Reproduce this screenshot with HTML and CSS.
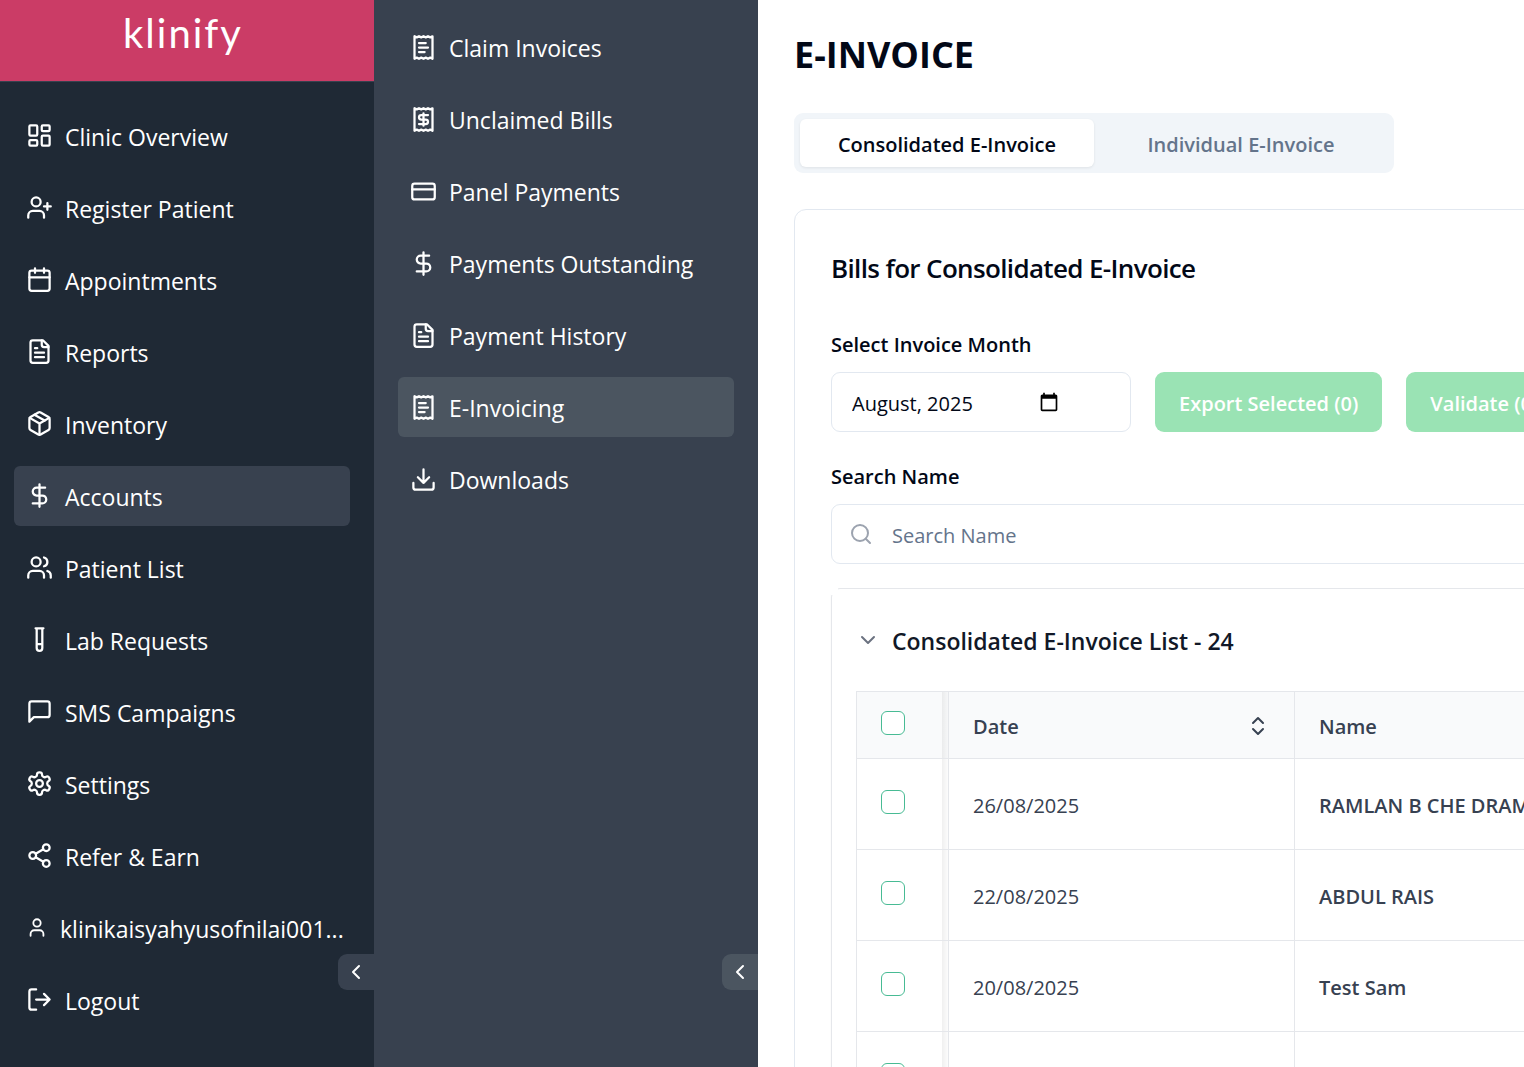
FILE: index.html
```html
<!DOCTYPE html>
<html lang="en">
<head>
    <meta charset="UTF-8">
    <meta name="viewport" content="width=device-width, initial-scale=1.0">
    <title>Klinify - E-Invoice</title>
    <link rel="stylesheet" href="styles.css">
</head>
<body>

    <!-- icon sprite -->
    <svg class="sprite" aria-hidden="true">
        <symbol id="i-dashboard" viewBox="0 0 24 24"><rect x="3" y="3" width="7" height="9" rx="1"/><rect x="14" y="3" width="7" height="5" rx="1"/><rect x="14" y="12" width="7" height="9" rx="1"/><rect x="3" y="16" width="7" height="5" rx="1"/></symbol>
        <symbol id="i-user-plus" viewBox="0 0 24 24"><path d="M16 21v-2a4 4 0 0 0-4-4H6a4 4 0 0 0-4 4v2"/><circle cx="9" cy="7" r="4"/><path d="M19 8v6M22 11h-6"/></symbol>
        <symbol id="i-calendar" viewBox="0 0 24 24"><path d="M8 2v4M16 2v4M3 10h18"/><rect x="3" y="4" width="18" height="18" rx="2"/></symbol>
        <symbol id="i-file" viewBox="0 0 24 24"><path d="M15 2H6a2 2 0 0 0-2 2v16a2 2 0 0 0 2 2h12a2 2 0 0 0 2-2V7Z"/><path d="M14 2v4a2 2 0 0 0 2 2h4M10 9H8M16 13H8M16 17H8"/></symbol>
        <symbol id="i-package" viewBox="0 0 24 24"><path d="m7.5 4.27 9 5.15"/><path d="M21 8a2 2 0 0 0-1-1.73l-7-4a2 2 0 0 0-2 0l-7 4A2 2 0 0 0 3 8v8a2 2 0 0 0 1 1.73l7 4a2 2 0 0 0 2 0l7-4A2 2 0 0 0 21 16Z"/><path d="m3.3 7 8.7 5 8.7-5M12 22V12"/></symbol>
        <symbol id="i-dollar" viewBox="0 0 24 24"><path d="M12 2v20M17 5H9.5a3.5 3.5 0 0 0 0 7h5a3.5 3.5 0 0 1 0 7H6"/></symbol>
        <symbol id="i-users" viewBox="0 0 24 24"><path d="M16 21v-2a4 4 0 0 0-4-4H6a4 4 0 0 0-4 4v2"/><circle cx="9" cy="7" r="4"/><path d="M22 21v-2a4 4 0 0 0-3-3.87M16 3.13a4 4 0 0 1 0 7.75"/></symbol>
        <symbol id="i-tube" viewBox="0 0 24 24"><path d="M14.5 2v17.5c0 1.4-1.1 2.5-2.5 2.5s-2.5-1.1-2.5-2.5V2M8.5 2h7M14.5 16h-5"/></symbol>
        <symbol id="i-message" viewBox="0 0 24 24"><path d="M21 15a2 2 0 0 1-2 2H7l-4 4V5a2 2 0 0 1 2-2h14a2 2 0 0 1 2 2z"/></symbol>
        <symbol id="i-settings" viewBox="0 0 24 24"><path d="M12.22 2h-.44a2 2 0 0 0-2 2v.18a2 2 0 0 1-1 1.73l-.43.25a2 2 0 0 1-2 0l-.15-.08a2 2 0 0 0-2.73.73l-.22.38a2 2 0 0 0 .73 2.73l.15.1a2 2 0 0 1 1 1.72v.51a2 2 0 0 1-1 1.74l-.15.09a2 2 0 0 0-.73 2.73l.22.38a2 2 0 0 0 2.73.73l.15-.08a2 2 0 0 1 2 0l.43.25a2 2 0 0 1 1 1.73V20a2 2 0 0 0 2 2h.44a2 2 0 0 0 2-2v-.18a2 2 0 0 1 1-1.73l.43-.25a2 2 0 0 1 2 0l.15.08a2 2 0 0 0 2.73-.73l.22-.39a2 2 0 0 0-.73-2.73l-.15-.08a2 2 0 0 1-1-1.74v-.5a2 2 0 0 1 1-1.74l.15-.09a2 2 0 0 0 .73-2.73l-.22-.38a2 2 0 0 0-2.73-.73l-.15.08a2 2 0 0 1-2 0l-.43-.25a2 2 0 0 1-1-1.73V4a2 2 0 0 0-2-2z"/><circle cx="12" cy="12" r="3"/></symbol>
        <symbol id="i-share" viewBox="0 0 24 24"><circle cx="18" cy="5" r="3"/><circle cx="6" cy="12" r="3"/><circle cx="18" cy="19" r="3"/><path d="m8.59 13.51 6.83 3.98M15.41 6.51l-6.82 3.98"/></symbol>
        <symbol id="i-user" viewBox="0 0 24 24"><path d="M19 21v-2a4 4 0 0 0-4-4H9a4 4 0 0 0-4 4v2"/><circle cx="12" cy="7" r="4"/></symbol>
        <symbol id="i-logout" viewBox="0 0 24 24"><path d="M9 21H5a2 2 0 0 1-2-2V5a2 2 0 0 1 2-2h4M16 17l5-5-5-5M21 12H9"/></symbol>
        <symbol id="i-receipt-text" viewBox="0 0 24 24"><path d="M4 2v20l2-1 2 1 2-1 2 1 2-1 2 1 2-1 2 1V2l-2 1-2-1-2 1-2-1-2 1-2-1-2 1Z"/><path d="M14 8H8M16 12H8M13 16H8"/></symbol>
        <symbol id="i-receipt" viewBox="0 0 24 24"><path d="M4 2v20l2-1 2 1 2-1 2 1 2-1 2 1 2-1 2 1V2l-2 1-2-1-2 1-2-1-2 1-2-1-2 1Z"/><path d="M16 8h-6a2 2 0 1 0 0 4h4a2 2 0 1 1 0 4H8M12 17.5v-11"/></symbol>
        <symbol id="i-card" viewBox="0 0 24 24"><rect x="2" y="5" width="20" height="14" rx="2"/><path d="M2 10h20"/></symbol>
        <symbol id="i-download" viewBox="0 0 24 24"><path d="M21 15v4a2 2 0 0 1-2 2H5a2 2 0 0 1-2-2v-4M7 10l5 5 5-5M12 15V3"/></symbol>
        <symbol id="i-search" viewBox="0 0 24 24"><circle cx="11" cy="11" r="8"/><path d="m21 21-4.3-4.3"/></symbol>
        <symbol id="i-left" viewBox="0 0 24 24"><path d="m15 18-6-6 6-6"/></symbol>
        <symbol id="i-down" viewBox="0 0 24 24"><path d="m6 9 6 6 6-6"/></symbol>
        <symbol id="i-sort" viewBox="0 0 24 24"><path d="m7 15 5 5 5-5M7 9l5-5 5 5"/></symbol>
        <symbol id="i-picker" viewBox="0 0 24 24"><path d="M20 3h-1V1h-2v2H7V1H5v2H4c-1.100 0-2 .9-2 2v16c0 1.100.9 2 2 2h16c1.100 0 2-.9 2-2V5c0-1.100-.9-2-2-2zm0 18H4V8h16v13z"/></symbol>
    </svg>

    <div class="app">
        <aside class="sidebar">
            <div class="logo">klinify</div>
            <nav class="menu">
                <a href="#"><svg class="icon"><use href="#i-dashboard"/></svg><span>Clinic Overview</span></a>
                <a href="#"><svg class="icon"><use href="#i-user-plus"/></svg><span>Register Patient</span></a>
                <a href="#"><svg class="icon"><use href="#i-calendar"/></svg><span>Appointments</span></a>
                <a href="#"><svg class="icon"><use href="#i-file"/></svg><span>Reports</span></a>
                <a href="#"><svg class="icon"><use href="#i-package"/></svg><span>Inventory</span></a>
                <a href="#" class="active"><svg class="icon"><use href="#i-dollar"/></svg><span>Accounts</span></a>
                <a href="#"><svg class="icon"><use href="#i-users"/></svg><span>Patient List</span></a>
                <a href="#"><svg class="icon"><use href="#i-tube"/></svg><span>Lab Requests</span></a>
                <a href="#"><svg class="icon"><use href="#i-message"/></svg><span>SMS Campaigns</span></a>
                <a href="#"><svg class="icon"><use href="#i-settings"/></svg><span>Settings</span></a>
                <a href="#"><svg class="icon"><use href="#i-share"/></svg><span>Refer &amp; Earn</span></a>
                <a href="#"><svg class="icon icon-user"><use href="#i-user"/></svg><span>klinikaisyahyusofnilai001...</span></a>
                <a href="#"><svg class="icon"><use href="#i-logout"/></svg><span>Logout</span></a>
            </nav>
            <button type="button" class="collapse" aria-label="Collapse menu"><svg class="icon"><use href="#i-left"/></svg></button>
        </aside>

        <aside class="submenu">
            <nav class="menu">
                <a href="#"><svg class="icon"><use href="#i-receipt-text"/></svg><span>Claim Invoices</span></a>
                <a href="#"><svg class="icon"><use href="#i-receipt"/></svg><span>Unclaimed Bills</span></a>
                <a href="#"><svg class="icon"><use href="#i-card"/></svg><span>Panel Payments</span></a>
                <a href="#"><svg class="icon"><use href="#i-dollar"/></svg><span>Payments Outstanding</span></a>
                <a href="#"><svg class="icon"><use href="#i-file"/></svg><span>Payment History</span></a>
                <a href="#" class="active"><svg class="icon"><use href="#i-receipt-text"/></svg><span>E-Invoicing</span></a>
                <a href="#"><svg class="icon"><use href="#i-download"/></svg><span>Downloads</span></a>
            </nav>
            <button type="button" class="collapse" aria-label="Collapse submenu"><svg class="icon"><use href="#i-left"/></svg></button>
        </aside>

        <main>
            <div class="content">
                <h1>E-INVOICE</h1>

                <div class="tabs" role="tablist">
                    <button type="button" role="tab" class="tab selected">Consolidated E-Invoice</button>
                    <button type="button" role="tab" class="tab">Individual E-Invoice</button>
                </div>

                <section class="card">
                    <h2>Bills for Consolidated E-Invoice</h2>

                    <label for="month">Select Invoice Month</label>
                    <div class="toolbar">
                        <div class="month">
                            <input type="text" id="month" value="August, 2025">
                            <svg class="picker"><use href="#i-picker"/></svg>
                        </div>
                        <button type="button" class="btn">Export Selected (0)</button>
                        <button type="button" class="btn">Validate (0)</button>
                    </div>

                    <label for="search">Search Name</label>
                    <div class="search">
                        <svg class="icon"><use href="#i-search"/></svg>
                        <input type="text" id="search" placeholder="Search Name">
                    </div>

                    <div class="panel">
                        <div class="panel-head">
                            <svg class="icon"><use href="#i-down"/></svg>
                            <h3>Consolidated E-Invoice List - 24</h3>
                        </div>
                        <table>
                            <thead>
                                <tr>
                                    <th class="check"><input type="checkbox" aria-label="Select all"></th>
                                    <th class="date"><div class="sort">Date <svg class="icon"><use href="#i-sort"/></svg></div></th>
                                    <th>Name</th>
                                </tr>
                            </thead>
                            <tbody>
                                <tr>
                                    <td class="check"><input type="checkbox" aria-label="Select bill"></td>
                                    <td>26/08/2025</td>
                                    <td class="name">RAMLAN B CHE DRAMAN</td>
                                </tr>
                                <tr>
                                    <td class="check"><input type="checkbox" aria-label="Select bill"></td>
                                    <td>22/08/2025</td>
                                    <td class="name">ABDUL RAIS</td>
                                </tr>
                                <tr>
                                    <td class="check"><input type="checkbox" aria-label="Select bill"></td>
                                    <td>20/08/2025</td>
                                    <td class="name">Test Sam</td>
                                </tr>
                                <tr>
                                    <td class="check"><input type="checkbox" aria-label="Select bill"></td>
                                    <td></td>
                                    <td></td>
                                </tr>
                            </tbody>
                        </table>
                    </div>
                </section>
            </div>
        </main>
    </div>

</body>
</html>
```
FILE: styles.css
```css
* {
    box-sizing: border-box;
}
body {
    margin: 0;
    font-family: "Open Sans", "Noto Sans", sans-serif;
    font-size: 20px;
    color: #020817;
    background-color: #fff;
}
h1, h2, h3 {
    margin: 0;
}
button, input {
    font-family: inherit;
    font-size: inherit;
    color: inherit;
}
.sprite {
    display: none;
}
.icon {
    flex-shrink: 0;
    width: 27px;
    height: 27px;
    fill: none;
    stroke: currentColor;
    stroke-width: 2;
    stroke-linecap: round;
    stroke-linejoin: round;
}
.app {
    display: flex;
    height: 100vh;
    overflow: hidden;
}

/* side menus */
.sidebar, .submenu {
    position: relative;
    flex-shrink: 0;
    color: #fff;
}
.sidebar {
    width: 374px;
    background-color: #1f2935;
}
.submenu {
    width: 384px;
    background-color: #38414f;
}
.logo {
    height: 82px;
    padding-right: 8px;
    border-bottom: 1px solid #38414f;
    background-color: #cb3c66;
    font-family: Lato, sans-serif;
    font-size: 40px;
    font-weight: 400;
    line-height: 66px;
    letter-spacing: 2px;
    text-align: center;
}
.menu {
    display: flex;
    flex-direction: column;
    gap: 12px;
    padding: 24px 24px 24px 14px;
}
.submenu .menu {
    padding: 17px 24px;
}
.menu a {
    display: flex;
    align-items: center;
    gap: 12px;
    height: 60px;
    padding: 0 12px 1px;
    border-radius: 6px;
    color: #fff;
    font-size: 23px;
    text-decoration: none;
    white-space: nowrap;
}
.submenu .menu a {
    padding-bottom: 0;
}
.menu span {
    padding-top: 3px;
}
.submenu span {
    padding-top: 2px;
}
.sidebar .active {
    background-color: #38414f;
}
.submenu .active {
    background-color: #4b5560;
}
.icon-user {
    width: 22px;
}
.collapse {
    position: absolute;
    right: 0;
    bottom: 77px;
    display: flex;
    align-items: center;
    justify-content: center;
    width: 36px;
    height: 36px;
    padding: 0;
    border: none;
    border-radius: 9px 0 0 9px;
    color: #fff;
    background-color: #38414f;
}
.submenu .collapse {
    background-color: #4b5560;
}
.collapse .icon {
    width: 24px;
    height: 24px;
}

/* page */
main {
    flex: 1;
    min-width: 0;
    overflow: hidden;
}
.content {
    min-width: 1200px;
    padding: 36px;
}
h1 {
    margin-bottom: 39px;
    font-size: 36px;
    line-height: 38px;
}
.tabs {
    display: grid;
    grid-template-columns: 1fr 1fr;
    max-width: 600px;
    height: 60px;
    margin-bottom: 36px;
    padding: 6px;
    border-radius: 9px;
    background-color: #f1f5f9;
}
.tab {
    padding: 2px 0 0;
    border: none;
    border-radius: 6px;
    color: #64748b;
    background: none;
    font-weight: 600;
}
.tab.selected {
    color: #020817;
    background-color: #fff;
    box-shadow: 0 1px 3px rgba(0, 0, 0, 0.08);
}
.card {
    padding: 36px;
    border: 1px solid #e2e8f0;
    border-radius: 12px;
}
.card h2 {
    margin-bottom: 38px;
    font-size: 26px;
    font-weight: 600;
    line-height: 44px;
    letter-spacing: -0.025em;
}
label {
    display: block;
    margin-bottom: 10px;
    font-weight: 600;
    line-height: 34px;
}
.toolbar {
    display: flex;
    gap: 24px;
    margin-bottom: 28px;
}
.month, .search {
    display: flex;
    align-items: center;
    height: 60px;
    border: 1px solid #e2e8f0;
    border-radius: 9px;
}
.month {
    width: 300px;
    padding: 0 71px 0 20px;
}
.month input, .search input {
    flex: 1;
    min-width: 0;
    height: 100%;
    padding: 2px 0 0;
    border: none;
    outline: none;
    background: none;
}
.picker {
    width: 20px;
    height: 20px;
    fill: #000;
}
.btn {
    height: 60px;
    padding: 2px 24px 0;
    border: none;
    border-radius: 9px;
    color: #fff;
    background-color: #9ae3b4;
    font-weight: 600;
}
.search {
    gap: 19px;
    margin-bottom: 24px;
    padding: 0 17px;
}
.search .icon {
    width: 24px;
    height: 24px;
    color: #9ca3af;
}
.search input::placeholder {
    color: #64748b;
}

/* invoice list */
.panel {
    position: relative;
    padding: 0 24px 24px;
    border: 1px solid #e5e7eb;
    border-radius: 9px;
    box-shadow: 0 1px 2px rgba(0, 0, 0, 0.05);
}
.panel::before {
    content: "";
    position: absolute;
    top: -1px;
    left: -1px;
    width: 7px;
    height: 7px;
    background-color: #fff;
}
.panel-head {
    display: flex;
    align-items: center;
    gap: 12px;
    height: 102px;
}
.panel-head .icon {
    width: 24px;
    height: 24px;
    color: #6b7280;
}
.panel-head h3 {
    padding-top: 2px;
    color: #111827;
    font-size: 23px;
    font-weight: 600;
}
table {
    width: 100%;
    border-collapse: collapse;
    table-layout: fixed;
    color: #374151;
}
th, td {
    height: 91px;
    padding: 2px 24px 0;
    border: 1px solid #e5e7eb;
    font-weight: 400;
    text-align: left;
}
th {
    height: 67px;
    background-color: #f9fafb;
    font-weight: 600;
}
.name {
    font-weight: 600;
}
.check {
    width: 92px;
    padding-top: 0;
    background-image: linear-gradient(to right, rgba(0, 0, 0, 0.06), rgba(0, 0, 0, 0.01));
    background-position: right;
    background-repeat: no-repeat;
    background-size: 6px 100%;
}
.date {
    width: 346px;
}
.sort {
    display: flex;
    align-items: center;
    justify-content: space-between;
}
.sort .icon {
    width: 24px;
    height: 24px;
}
.check input {
    appearance: none;
    display: block;
    width: 24px;
    height: 24px;
    margin: 0 0 4px;
    border: 1px solid #48bb94;
    border-radius: 6px;
    background-color: #fff;
}
```
